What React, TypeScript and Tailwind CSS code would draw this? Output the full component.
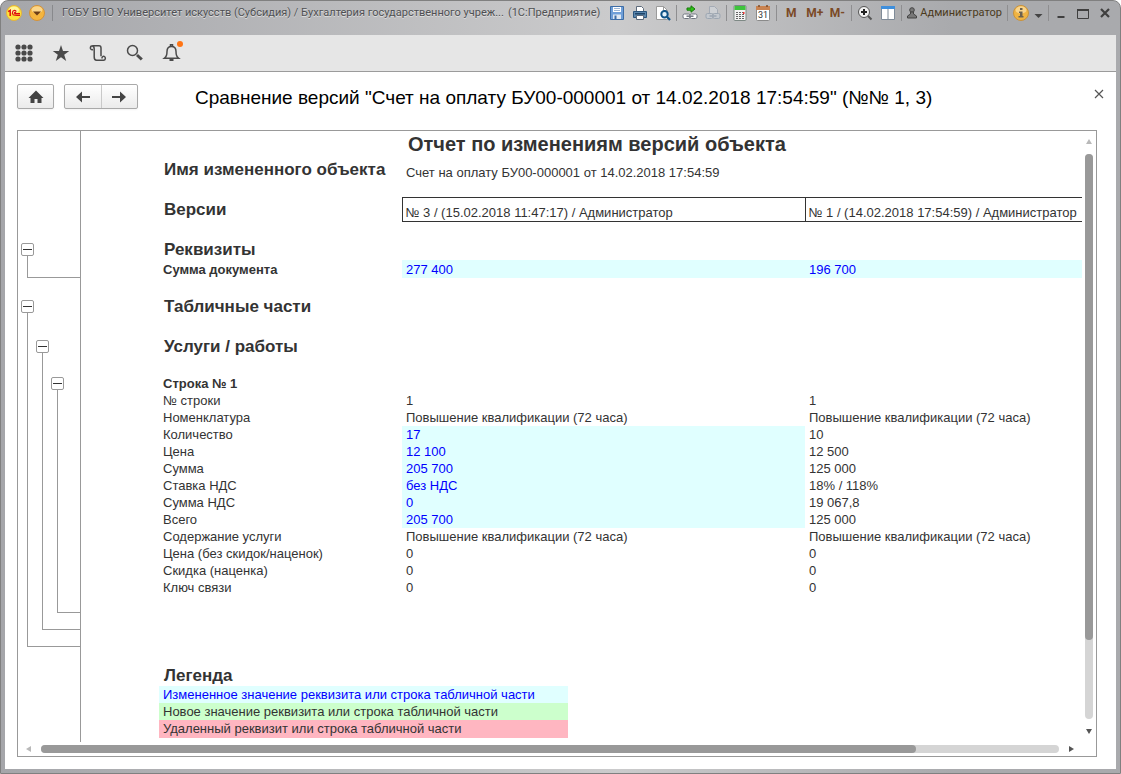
import { ReactNode } from "react";

type Row = {
  label: string;
  left: string;
  right: string;
  changed?: boolean;
};

const rows: Row[] = [
  { label: "№ строки", left: "1", right: "1" },
  {
    label: "Номенклатура",
    left: "Повышение квалификации (72 часа)",
    right: "Повышение квалификации (72 часа)",
  },
  { label: "Количество", left: "17", right: "10", changed: true },
  { label: "Цена", left: "12 100", right: "12 500", changed: true },
  { label: "Сумма", left: "205 700", right: "125 000", changed: true },
  { label: "Ставка НДС", left: "без НДС", right: "18% / 118%", changed: true },
  { label: "Сумма НДС", left: "0", right: "19 067,8", changed: true },
  { label: "Всего", left: "205 700", right: "125 000", changed: true },
  {
    label: "Содержание услуги",
    left: "Повышение квалификации (72 часа)",
    right: "Повышение квалификации (72 часа)",
  },
  { label: "Цена (без скидок/наценок)", left: "0", right: "0" },
  { label: "Скидка (наценка)", left: "0", right: "0" },
  { label: "Ключ связи", left: "0", right: "0" },
];

function IconButton({ label, children }: { label: string; children: ReactNode }) {
  return (
    <button
      type="button"
      aria-label={label}
      className="flex h-4 w-4 shrink-0 items-center justify-center"
    >
      {children}
    </button>
  );
}

function Group({ children }: { children: ReactNode }) {
  return (
    <div className="flex h-4 items-center gap-[7px] border-r border-[#8e8e90] px-[5px]">
      {children}
    </div>
  );
}

function Glyph({ children }: { children: ReactNode }) {
  return (
    <svg width="16" height="16" viewBox="0 0 16 16" fill="none" aria-hidden="true">
      {children}
    </svg>
  );
}

function TitleBar() {
  return (
    <header className="flex h-[34px] items-start pt-1 pr-[3px] pl-px font-[Roboto,sans-serif] text-[11px] leading-4">
      <div className="flex shrink-0 items-center gap-[7px] border-r border-[#88898c] pr-[7px]">
        <button type="button" aria-label="1С" className="h-4 w-4">
          <Glyph>
            <circle cx="8" cy="8" r="7.5" fill="#fde33a" stroke="#e3b23c" />
            <ellipse cx="8" cy="5" rx="5" ry="3.5" fill="#fff59a" />
            <path d="M2.2 6.6L4.2 5.4V11" stroke="#e01010" strokeWidth="1.5" />
            <path
              d="M10.3 6.6C9.8 5.5 8.8 5.2 7.9 5.5C6.3 6 6 8.6 7.2 9.7C7.8 10.2 8.5 10.3 14 10.3M10 7.7C9.4 7 8.2 7.4 8.6 8.3C8.8 8.6 9.5 8.6 14 8.6"
              stroke="#e01010"
              strokeWidth="1.2"
            />
          </Glyph>
        </button>
        <button type="button" aria-label="Главное меню" className="h-4 w-4">
          <Glyph>
            <circle cx="8" cy="8" r="7.5" fill="#f4b53e" stroke="#d3923a" />
            <ellipse cx="8" cy="4.8" rx="5.4" ry="3.6" fill="#fbd68a" />
            <path d="M4 6.5H12L8 10.5Z" fill="#6b3d16" />
          </Glyph>
        </button>
      </div>
      <h1 className="flex min-w-0 flex-1 gap-1 pl-[9px] whitespace-nowrap text-[#4f5053] [text-shadow:0_1px_0_#dedede]">
        <span>
          ГОБУ ВПО Университет искусств (Субсидия) / Бухгалтерия государственного учреж...
        </span>
        <span>(1С:Предприятие)</span>
      </h1>

      <div className="flex shrink-0 items-center">
        <Group>
          <IconButton label="Сохранить">
            <Glyph>
              <path d="M1.5 1.5H14.5V14.5H1.5Z" fill="#6f9fd8" stroke="#3d6da6" />
              <path d="M4 2H12V7H4Z" fill="#fff" />
              <path d="M5 3.5H11M5 5.5H11" stroke="#9db7d6" />
              <path d="M4 9.5H12V14H4Z" fill="#dfe8f2" />
              <path d="M5.5 10.5H7.5V14H5.5Z" fill="#3d6da6" />
            </Glyph>
          </IconButton>
          <IconButton label="Печать">
            <Glyph>
              <path d="M4.5 7V1.5H9.5L11.5 3.5V7" fill="#fff" stroke="#5d6b7c" />
              <path d="M1.5 6.5H14.5V12.5H1.5Z" fill="#5b87ae" stroke="#2b557d" />
              <path d="M3 8H13V9.5H3Z" fill="#1f4468" />
              <path d="M4.5 10.5H11.5V14.5H4.5Z" fill="#fff" stroke="#5d6b7c" />
            </Glyph>
          </IconButton>
          <IconButton label="Предварительный просмотр">
            <Glyph>
              <path d="M1.5 1.5H8.5L12.5 5.5V14.5H1.5Z" fill="#fff" stroke="#9b9b9b" />
              <path d="M8.5 1.5V5.5H12.5" stroke="#9b9b9b" />
              <circle cx="9.5" cy="9.3" r="3.2" fill="#e4f2fb" stroke="#0f5386" strokeWidth="2" />
              <path d="M12 11.7L15 15" stroke="#0f5386" strokeWidth="2.2" />
            </Glyph>
          </IconButton>
        </Group>
        <Group>
          <IconButton label="Получить ссылку">
            <Glyph>
              <path d="M5 3H9V0.8L13 4L9 7.2V5.2H5Z" fill="#2fc21b" stroke="#187a0c" />
              <rect x="1" y="9" width="7" height="4.5" rx="1.5" fill="#fff" stroke="#707680" />
              <rect x="8" y="9" width="7" height="4.5" rx="1.5" fill="#fff" stroke="#707680" />
              <path d="M4.5 11.2H11.5" stroke="#707680" strokeWidth="1.5" />
            </Glyph>
          </IconButton>
          <IconButton label="Перейти по ссылке">
            <Glyph>
              <path d="M4.5 8V1.5H9.5L12.5 4.5V8" fill="#cdd0d4" stroke="#a4abb5" />
              <rect x="1" y="8.5" width="7" height="5" rx="1.5" fill="#c3c8ce" stroke="#9ca6b2" />
              <rect x="8" y="8.5" width="7" height="5" rx="1.5" fill="#c3c8ce" stroke="#9ca6b2" />
              <path d="M4.5 11H11.5" stroke="#9ca6b2" strokeWidth="1.5" />
            </Glyph>
          </IconButton>
        </Group>
        <Group>
          <IconButton label="Калькулятор">
            <Glyph>
              <rect x="2" y="0.5" width="12" height="15" rx="1" fill="#f3f3f3" stroke="#7e8985" />
              <path d="M2.5 1H13.5V5H2.5Z" fill="#3ec43c" />
              <path
                d="M4 7.5H12.5M4 9.5H12.5M4 11.5H12.5M4 13.5H12.5"
                stroke="#666"
                strokeDasharray="2 1"
              />
              <path d="M11 7H12.5V9H11Z" fill="#e33" />
            </Glyph>
          </IconButton>
          <IconButton label="Календарь">
            <svg width="16" height="16" viewBox="0 0 16 16" aria-hidden="true">
              <rect x="1.5" y="1.5" width="13" height="14" rx="1" fill="#fff" stroke="#8a8a8a" />
              <path d="M1 1H15V5H1Z" fill="#c98351" />
              <path d="M4 0V2M12 0V2" stroke="#7a4a28" strokeWidth="1.5" />
              <text x="8" y="13" textAnchor="middle" fontSize="9" fill="#333">
                31
              </text>
            </svg>
          </IconButton>
        </Group>
        <div className="flex h-4 items-center gap-[7px] border-r border-[#8e8e90] px-[6px] text-[12px] font-bold text-[#7b4a27] [text-shadow:0_1px_0_#e0e0e0]">
          <button type="button" className="w-4 text-center">M</button>
          <button type="button" className="w-4 text-center">M+</button>
          <button type="button" className="w-4 text-center">M-</button>
        </div>
        <Group>
          <IconButton label="Масштаб">
            <Glyph>
              <circle cx="7" cy="7" r="5.5" fill="#f1f1f1" stroke="#555" />
              <path d="M4 7H10M7 4V10" stroke="#222" strokeWidth="2" />
              <path d="M11 11L14.5 14.5" stroke="#555" strokeWidth="2" />
            </Glyph>
          </IconButton>
          <IconButton label="Панели">
            <Glyph>
              <path d="M1.5 1.5H14.5V14.5H1.5Z" fill="#fff" stroke="#7f8b98" />
              <path d="M1 1H15V4H1Z" fill="#3f8fdc" />
              <path d="M8 4V14" stroke="#7f8b98" />
            </Glyph>
          </IconButton>
        </Group>
        <Group>
          <button type="button" className="flex items-center gap-[3px] text-[#4b3a1c]">
            <svg width="10" height="12" viewBox="0 0 10 12" aria-hidden="true">
              <circle cx="5" cy="3" r="2.3" fill="#777" stroke="#444" />
              <path d="M0.5 11V9L3.5 7V5H6.5V7L9.5 9V11Z" fill="#777" stroke="#444" />
            </svg>
            Администратор
          </button>
        </Group>
        <div className="flex h-4 items-center gap-[5px] border-r border-[#8e8e90] px-[5px]">
          <IconButton label="Справка">
            <Glyph>
              <circle cx="8" cy="8" r="7.5" fill="#f0b443" stroke="#c8923c" />
              <ellipse cx="8" cy="5" rx="5.5" ry="3.7" fill="#f8d48c" />
              <path d="M7 3H9.5V5H7ZM6 6.5H9.5V11H10.5V12.5H5.5V11H7V8H6Z" fill="#6c6250" />
            </Glyph>
          </IconButton>
          <button type="button" aria-label="Меню справки" className="pt-1.5">
            <svg width="9" height="5" viewBox="0 0 9 5" aria-hidden="true">
              <path d="M0.5 0H8.5L4.5 4Z" fill="#444" />
            </svg>
          </button>
        </div>
        <div className="flex gap-1.5 pl-1">
          <IconButton label="Свернуть">
            <Glyph>
              <path d="M4.5 12H11.5" stroke="#3f3f3f" strokeWidth="2" />
            </Glyph>
          </IconButton>
          <IconButton label="Развернуть">
            <Glyph>
              <path d="M2.5 4.5H13.5V13.5H2.5Z" stroke="#3f3f3f" />
              <path d="M2 5H14" stroke="#3f3f3f" strokeWidth="2" />
            </Glyph>
          </IconButton>
          <IconButton label="Закрыть">
            <Glyph>
              <path d="M4 4L12 12M12 4L4 12" stroke="#3f3f3f" strokeWidth="2.2" />
            </Glyph>
          </IconButton>
        </div>
      </div>
    </header>
  );
}

function Toolbar() {
  return (
    <nav className="flex h-[37px] items-center gap-[17px] border-b border-[#9b9b9b] bg-[#e6e6e6] pl-[9px] text-[#4a4a4a]">
      <button type="button" aria-label="Все функции">
        <svg width="20" height="20" viewBox="0 0 20 20" fill="currentColor" aria-hidden="true">
          {[4, 10, 16].map((y) =>
            [4, 10, 16].map((x) => <circle key={`${x}-${y}`} cx={x} cy={y} r="2.6" />),
          )}
        </svg>
      </button>
      <button type="button" aria-label="Избранное">
        <svg width="20" height="20" viewBox="0 0 20 20" fill="currentColor" aria-hidden="true">
          <path d="M10 2L12 8H18.2L13.2 11.7L15.2 18L10 14.2L4.8 18L6.8 11.7L1.8 8H8Z" />
        </svg>
      </button>
      <button type="button" aria-label="История">
        <svg
          width="20"
          height="20"
          viewBox="0 0 20 20"
          fill="none"
          stroke="currentColor"
          strokeWidth="1.5"
          aria-hidden="true"
        >
          <path d="M5 6.5C3.2 7 2.2 6 2.4 4.6C2.6 3.4 3.5 2.8 5 2.8H11C12.3 2.8 13 3.6 13 5V13.3M4.5 3C5.8 3.3 6.2 4.5 6.2 6V14C6.2 16.2 7 17.2 8.5 17.2H15.6C17.6 17.2 18 14.2 16.2 13.4C15 13 13.8 14 14 15.5" />
        </svg>
      </button>
      <button type="button" aria-label="Поиск">
        <svg width="20" height="20" viewBox="0 0 20 20" fill="none" stroke="currentColor" aria-hidden="true">
          <circle cx="7.5" cy="7.5" r="5" strokeWidth="1.5" />
          <path d="M12 12L16.8 16.5" strokeWidth="3" />
        </svg>
      </button>
      <button type="button" aria-label="Оповещения" className="relative">
        <svg
          width="20"
          height="20"
          viewBox="0 0 20 20"
          fill="none"
          stroke="currentColor"
          strokeWidth="1.5"
          aria-hidden="true"
        >
          <path d="M2.5 15.2C4.8 13.5 5 12 5 8.5C5 5.5 6.5 3.5 9.5 3.5S14 5.5 14 8.5C14 12 14.2 13.5 16.5 15.2Z" />
          <path d="M8.5 3.5V1.8H10.5V3.5" />
          <path d="M7.5 17H11.5" strokeWidth="2" />
        </svg>
        <span className="absolute -top-0.5 -right-px h-1.5 w-1.5 rounded-full bg-[#ff7414]" />
      </button>
    </nav>
  );
}

function Arrow({ flip }: { flip?: boolean }) {
  return (
    <svg
      width="14"
      height="12"
      viewBox="0 0 14 12"
      className={flip ? "rotate-180" : ""}
      fill="#444"
      aria-hidden="true"
    >
      <path d="M0 6L6 0.5V4.9H14V7.1H6V11.5Z" />
    </svg>
  );
}

function PageHeader() {
  return (
    <div className="flex items-start">
      <button
        type="button"
        aria-label="Начальная страница"
        className="flex h-[25px] w-[37px] items-center justify-center rounded-xs border border-[#a9a9a9] bg-linear-to-b from-white to-[#ebebeb] shadow-xs"
      >
        <svg width="16" height="14" viewBox="0 0 16 14" fill="#444" aria-hidden="true">
          <path d="M8 0.5L15.5 8H13.5V13H9.5V9H6.5V13H2.5V8H0.5Z" />
        </svg>
      </button>
      <div className="ml-2.5 flex h-[25px] w-[74px] rounded-xs border border-[#a9a9a9] bg-linear-to-b from-white to-[#ebebeb] shadow-xs">
        <button
          type="button"
          aria-label="Назад"
          className="flex flex-1 items-center justify-center border-r border-[#c9c9c9]"
        >
          <Arrow />
        </button>
        <button type="button" aria-label="Вперед" className="flex flex-1 items-center justify-center">
          <Arrow flip />
        </button>
      </div>
      <h2 className="ml-[57px] flex-1 text-[19px] leading-7 text-black">
        Сравнение версий "Счет на оплату БУ00-000001 от 14.02.2018 17:54:59" (№№ 1, 3)
      </h2>
      <button type="button" aria-label="Закрыть" className="pt-[5px]">
        <svg width="10" height="10" viewBox="0 0 10 10" stroke="#555" strokeWidth="1.2" aria-hidden="true">
          <path d="M1 1L9 9M9 1L1 9" />
        </svg>
      </button>
    </div>
  );
}

function Collapse() {
  return (
    <button
      type="button"
      aria-label="Свернуть группу"
      className="flex h-[13px] w-[13px] items-center justify-center rounded-xs border border-[#999] bg-white"
    >
      <span className="h-px w-[9px] bg-[#333]" />
    </button>
  );
}

// Each bracket runs down from its button and closes at the last row of the group
function Outline() {
  return (
    <div className="w-[63px] shrink-0 border-r border-[#999] pt-28 pl-[3px]">
      <Collapse />
      <div className="ml-1.5 h-[22px] border-b border-l border-[#999]" />
      <div className="pt-[22px]">
        <Collapse />
        <div className="ml-1.5 border-b border-l border-[#999] pt-[27px] pb-4 pl-2">
          <Collapse />
          <div className="ml-1.5 border-b border-l border-[#999] pt-6 pb-4 pl-2">
            <Collapse />
            <div className="ml-1.5 h-[223px] border-b border-l border-[#999]" />
          </div>
        </div>
      </div>
    </div>
  );
}

function Heading({ children, className }: { children: ReactNode; className: string }) {
  return (
    <tr className={className}>
      <td />
      <th
        colSpan={3}
        scope="colgroup"
        className="pt-px pl-[5px] text-left align-top text-[17px] leading-5"
      >
        {children}
      </th>
    </tr>
  );
}

function Report() {
  return (
    <div className="min-w-0 flex-1 overflow-hidden text-[13px] leading-[17px] text-[#333]">
      <table className="w-full table-fixed border-collapse">
        <colgroup>
          <col className="w-[78px]" />
          <col className="w-[243px]" />
          <col className="w-[403px]" />
          <col />
        </colgroup>
        <tbody>
          <tr className="h-[28px]">
            <td />
            <td />
            <th colSpan={2} className="pl-1.5 text-left align-top text-[20px] leading-[26px]">
              Отчет по изменениям версий объекта
            </th>
          </tr>
          <tr className="h-[38px]">
            <td />
            <th
              scope="row"
              className="pt-px pl-[5px] text-left align-top text-[17px] leading-5 whitespace-nowrap"
            >
              Имя измененного объекта
            </th>
            <td colSpan={2} className="pt-[5px] pl-1 align-top">
              Счет на оплату БУ00-000001 от 14.02.2018 17:54:59
            </td>
          </tr>
          <tr className="h-6">
            <td />
            <th scope="row" className="pt-0.5 pl-[5px] text-left text-[17px] leading-5">
              Версии
            </th>
            <td className="border border-[#333] pl-[3px] align-bottom">
              № 3 / (15.02.2018 11:47:17) / Администратор
            </td>
            <td className="border-y border-[#333] pl-[3px] align-bottom whitespace-nowrap">
              № 1 / (14.02.2018 17:54:59) / Администратор
            </td>
          </tr>
          <tr className="h-[18px]">
            <td />
          </tr>
          <Heading className="h-[21px]">Реквизиты</Heading>
          <tr className="h-[18px]">
            <td />
            <th scope="row" className="pl-1 text-left">Сумма документа</th>
            <td className="bg-[#e0ffff] pl-1 text-[#0000ff]">277 400</td>
            <td className="bg-[#e0ffff] pl-1 text-[#0000ff]">196 700</td>
          </tr>
          <tr className="h-[18px]">
            <td />
          </tr>
          <Heading className="h-10">Табличные части</Heading>
          <Heading className="h-[39px]">Услуги / работы</Heading>
          <tr>
            <td />
            <th colSpan={3} className="pl-1 text-left">Строка № 1</th>
          </tr>
          {rows.map((r) => (
            <tr key={r.label}>
              <td />
              <th scope="row" className="pl-1 text-left font-normal">{r.label}</th>
              <td className={r.changed ? "bg-[#e0ffff] pl-1 text-[#0000ff]" : "pl-1"}>{r.left}</td>
              <td className="pl-1">{r.right}</td>
            </tr>
          ))}
        </tbody>
      </table>

      <section className="mt-[69px] ml-[78px] max-w-[409px]">
        <h3 className="pl-[5px] text-[17px] leading-[21px] font-bold">Легенда</h3>
        <ul>
          <li className="bg-[#e0ffff] pl-1 text-[#0000ff]">
            Измененное значение реквизита или строка табличной части
          </li>
          <li className="bg-[#ccffcc] pl-1">Новое значение реквизита или строка табличной части</li>
          <li className="bg-[#ffb6c1] pb-px pl-1">Удаленный реквизит или строка табличной части</li>
        </ul>
      </section>
    </div>
  );
}

function VerticalScroll() {
  return (
    <div className="flex w-[14px] shrink-0 flex-col items-center pt-2 pb-2">
      <svg width="6" height="5" viewBox="0 0 6 5" fill="#b9b9b9" aria-hidden="true">
        <path d="M3 0L6 5H0Z" />
      </svg>
      <div className="mt-2.5 mb-2.5 w-2 flex-1 rounded-full bg-[#d5d5d5]">
        <div className="h-[86%] rounded-full bg-[#999]" />
      </div>
      <svg width="6" height="5" viewBox="0 0 6 5" fill="#555" aria-hidden="true">
        <path d="M0 0H6L3 5Z" />
      </svg>
    </div>
  );
}

function HorizontalScroll() {
  return (
    <div className="flex h-[14px] items-center pr-[22px] pl-2">
      <svg width="5" height="6" viewBox="0 0 5 6" fill="#b9b9b9" aria-hidden="true">
        <path d="M5 0V6L0 3Z" />
      </svg>
      <div className="mr-2.5 ml-2.5 h-2 flex-1 rounded-full bg-[#d5d5d5]">
        <div className="h-full w-[86%] rounded-full bg-[#999]" />
      </div>
      <svg width="5" height="6" viewBox="0 0 5 6" fill="#555" aria-hidden="true">
        <path d="M0 0L5 3L0 6Z" />
      </svg>
    </div>
  );
}

export default function App() {
  return (
    <div className="bg-white font-['Liberation_Sans',Arial,sans-serif]">
      <div className="flex min-h-screen flex-col rounded-t-lg border border-[#808080] bg-linear-to-r from-[#a5a6aa] via-[#cbcbcc] via-55% to-[#a9aaad] to-85% px-1 pb-1">
        <TitleBar />
        <main className="flex flex-1 flex-col bg-white">
          <Toolbar />
          <div className="flex flex-1 flex-col px-3 pt-3 pb-3">
            <PageHeader />
            <div className="mt-[18px] mr-[7px] flex flex-1 flex-col border border-[#999]">
              <div className="flex flex-1">
                <Outline />
                <Report />
                <VerticalScroll />
              </div>
              <HorizontalScroll />
            </div>
          </div>
        </main>
      </div>
    </div>
  );
}
